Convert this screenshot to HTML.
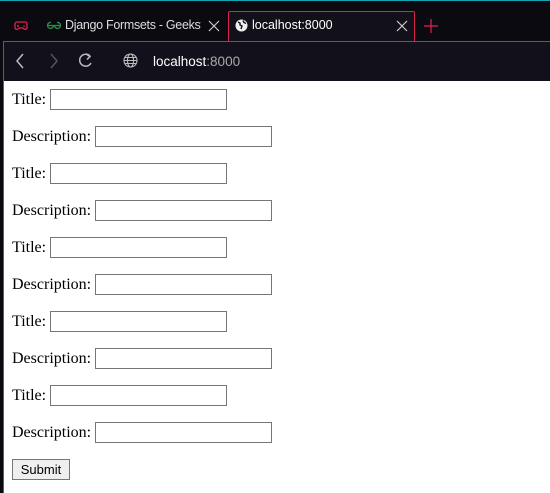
<!DOCTYPE html>
<html><head><style>
*{box-sizing:border-box}
body{margin:0;width:550px;height:493px;overflow:hidden;background:#0b0a10;position:relative;font-family:"Liberation Serif",serif}
.top{position:absolute;left:0;top:0;width:550px;height:1px;background:#12a5b5}
.line{position:absolute;left:3px;top:41px;width:547px;height:1px;background:#d8234f}
.lb{position:absolute;left:3px;top:41px;width:1px;height:452px;background:#d8234f}
.tab{position:absolute;left:228px;top:11px;width:187px;height:31px;background:#12111b;border:1px solid #d8234f;border-bottom:none;border-radius:2px 2px 0 0}
.tb{position:absolute;left:4px;top:42px;width:546px;height:39px;background:#12111b}
.t{position:absolute;font-family:"Liberation Sans",sans-serif;font-size:12.5px;color:#ddd;white-space:nowrap}
.page{position:absolute;left:4px;top:81px;width:546px;height:412px;background:#fff;padding:8px 0 0 8px;font-size:16px;color:#000}
p{margin:0 0 16px;height:21px;line-height:21px}
input[type=text]{width:177px;height:21px;border:1px solid #767676;vertical-align:top;margin:0 0 0 4px;padding:0}
button{font-family:"Liberation Sans",sans-serif;font-size:13px;height:21px;width:58px;border:1px solid #767676;background:#efefef;padding:0}
</style></head><body>
<div class="top"></div>
<svg style="position:absolute;left:14px;top:20px" width="14" height="12" viewBox="0 0 14 12"><path d="M3 2h8a2 2 0 0 1 2 2l0 4a2 2 0 0 1-3 1l-1-1H5L4 9a2 2 0 0 1-3-1V4a2 2 0 0 1 2-2z" fill="none" stroke="#e0234e" stroke-width="1.3"/><path d="M4 5v2M3 6h2" stroke="#e0234e"/><circle cx="10" cy="6" r=".8" fill="#e0234e"/></svg>
<svg style="position:absolute;left:47px;top:21px" width="14" height="9" viewBox="0 0 14 9"><path d="M1 4.5h12M4 1.5a3 3 0 1 0 2.5 3M10 1.5a3 3 0 1 1-2.5 3" fill="none" stroke="#2f8d46" stroke-width="1.3"/></svg>
<div class="t" style="left:65px;top:18px;width:136px;overflow:hidden;letter-spacing:-0.3px">Django Formsets - Geeksforgeeks</div>
<svg style="position:absolute;left:208px;top:20px" width="12" height="12"><path d="M1 1l10 10M11 1L1 11" stroke="#ccc" stroke-width="1.2"/></svg>
<div class="tab"></div>
<div class="line"></div>
<svg style="position:absolute;left:235px;top:19px" width="13" height="13" viewBox="0 0 13 13"><circle cx="6.5" cy="6.5" r="6" fill="#eee"/><path d="M3 3l2 1 0 2 2 1-1 3M8 1.5l1 2 2 1" stroke="#12111b" stroke-width="1.4" fill="none"/></svg>
<div class="t" style="left:252px;top:18px;color:#fff">localhost:8000</div>
<svg style="position:absolute;left:396px;top:20px" width="12" height="12"><path d="M1 1l10 10M11 1L1 11" stroke="#ccc" stroke-width="1.2"/></svg>
<svg style="position:absolute;left:424px;top:19px" width="14" height="14"><path d="M7 0v14M0 7h14" stroke="#e0234e" stroke-width="1.2"/></svg>
<div class="tb"></div>
<div class="lb"></div>
<svg style="position:absolute;left:14px;top:52px" width="90" height="18" viewBox="0 0 90 18"><path d="M9 2L3 9l6 7" stroke="#bbb" stroke-width="1.5" fill="none"/><path d="M37 2l6 7-6 7" stroke="#555" stroke-width="1.5" fill="none"/><path d="M76 4A6 6 0 1 0 77 11" stroke="#bbb" stroke-width="1.5" fill="none"/><path d="M72 2l4 2.5-3 3" stroke="#bbb" stroke-width="1.5" fill="none"/><path d="M91 7v1M91 10v1M91 13v1" stroke="#555"/></svg>
<svg style="position:absolute;left:123px;top:53px" width="15" height="15" viewBox="0 0 15 15"><g fill="none" stroke="#bbb" stroke-width="1.1"><circle cx="7.5" cy="7.5" r="6.5"/><ellipse cx="7.5" cy="7.5" rx="3" ry="6.5"/><path d="M1 7.5h13M2 4.5h11M2 10.5h11"/></g></svg>
<div class="t" style="left:153px;top:54px;font-size:13.5px;color:#fff">localhost<span style="color:#aaa">:8000</span></div>
<div class="page">
<p>Title:<input type="text"></p>
<p>Description:<input type="text"></p>
<p>Title:<input type="text"></p>
<p>Description:<input type="text"></p>
<p>Title:<input type="text"></p>
<p>Description:<input type="text"></p>
<p>Title:<input type="text"></p>
<p>Description:<input type="text"></p>
<p>Title:<input type="text"></p>
<p>Description:<input type="text"></p>
<button>Submit</button>
</div>
</body></html>
